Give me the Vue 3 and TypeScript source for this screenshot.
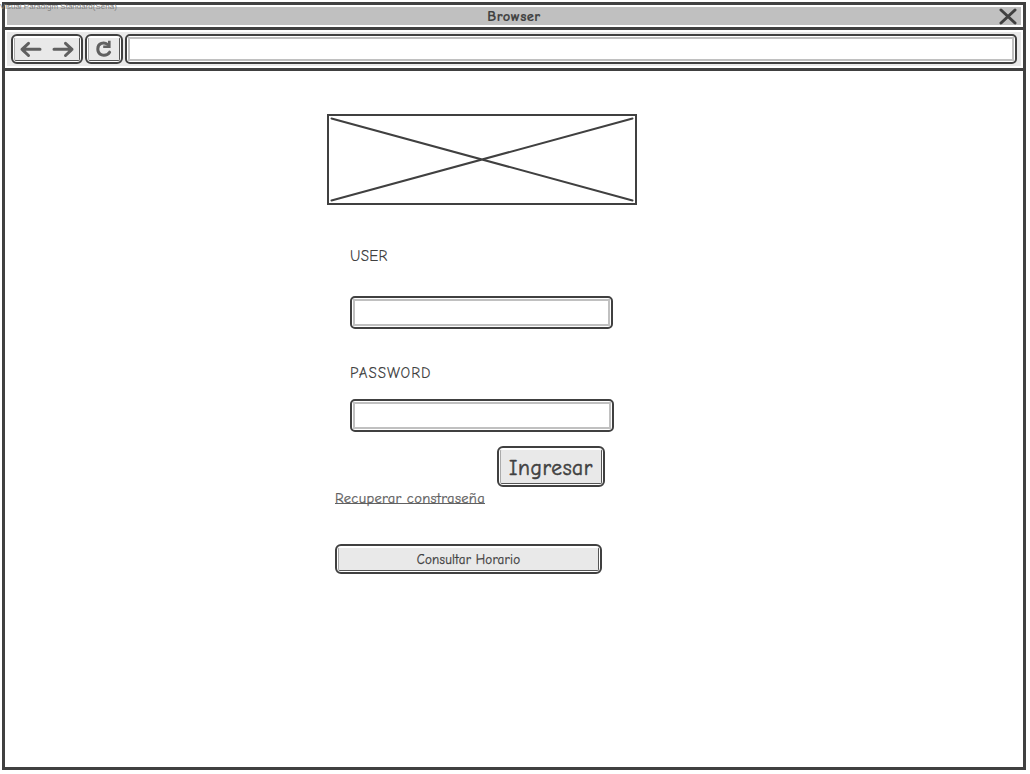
<script setup lang="ts">
import { ref } from 'vue'

const user = ref('')
const password = ref('')
const address = ref('')
</script>

<template>
  <div class="screen">
    <span class="watermark">Visual Paradigm Standard(Sena)</span>
    <main class="window">
      <header class="titlebar">
        <span class="title">Browser</span>
        <svg class="close" width="18" height="17" viewBox="0 0 18 17">
          <path d="M2 2 L16 15 M16 2 L2 15" />
        </svg>
      </header>
      <nav class="toolbar">
        <div class="button nav-pair">
          <svg width="68" height="26" viewBox="0 0 68 26">
            <path d="M27 13.3H9 M15.5 7.3L9 13.3L15.5 19.5 M41 13.3H59 M52.5 7.3L59 13.3L52.5 19.5" />
          </svg>
        </div>
        <div class="button reload">
          <svg width="34" height="26" viewBox="0 0 34 26">
            <path d="M20.5 8.4C17 5.6 10.8 7 10.8 13C10.8 18 14.5 19.3 17 19.2C19.5 19.2 21.5 18 22.6 16.2" />
            <path class="tip" d="M22.3 4.8V10.7H16.2" />
          </svg>
        </div>
        <input v-model="address" class="field address" type="text" aria-label="URL" />
      </nav>
      <section class="page">
        <svg class="image" width="310" height="91" viewBox="0 0 310 91">
          <path class="frame" d="M1 1H309V90H1Z" />
          <path d="M4.5 4.5L305.5 86.5M305.5 4.5L4.5 86.5" />
        </svg>
        <label class="label user-label" for="user">USER</label>
        <input id="user" v-model="user" class="field user-field" type="text" />
        <label class="label password-label" for="password">PASSWORD</label>
        <input id="password" v-model="password" class="field password-field" type="password" />
        <button class="button submit" type="button"><span>Ingresar</span></button>
        <a class="recover"><span>Recuperar constraseña</span></a>
        <button class="button schedule" type="button"><span>Consultar Horario</span></button>
      </section>
    </main>
  </div>
</template>

<style>
body {
  margin: 0;
  background: #fff;
}
</style>

<style scoped>
.screen {
  position: relative;
  box-sizing: border-box;
  width: 1030px;
  height: 774px;
  padding: 2px 4px 4px 2px;
  overflow: hidden;
  background: #fff;
  color: #404040;
  font-family: "Comic Sans MS", "Comic Neue", "Noto Sans", sans-serif;
  font-variant-ligatures: none;
}
.watermark {
  position: absolute;
  z-index: 2;
  left: 0;
  top: 2px;
  font: 8px/10px "Liberation Sans", sans-serif;
  color: #808080;
  white-space: nowrap;
}
.window {
  box-sizing: border-box;
  width: 1024px;
  height: 768px;
  border: 3px solid #404040;
  background: #fff;
}
.titlebar {
  position: relative;
  display: flex;
  align-items: center;
  justify-content: center;
  box-sizing: border-box;
  height: 22px;
  border: 2px solid #fff;
  background: #c0c0c0;
}
.title {
  padding-top: 2px;
  font-size: 14.5px;
  line-height: 18px;
  font-weight: 700;
  letter-spacing: 0.45px;
  -webkit-text-stroke: 0.2px currentColor;
}
.close {
  position: absolute;
  right: 4px;
  top: 1px;
}
svg {
  display: block;
  fill: none;
  stroke: #404040;
  stroke-linecap: round;
  stroke-linejoin: round;
}
.close path {
  stroke-width: 3;
}
.toolbar {
  display: flex;
  gap: 2px;
  box-sizing: border-box;
  height: 44px;
  padding: 2px 4px;
  border: solid #404040;
  border-width: 3px 0;
  background: #e9e9e9;
  box-shadow: inset 0 0 0 2px #fff;
}
.toolbar > * {
  margin-top: 2px;
  height: 30px;
  flex: none;
}
.toolbar > .nav-pair {
  width: 72px;
  margin-left: 2px;
}
.toolbar > .reload {
  width: 38px;
}
.toolbar > .address {
  width: 892px;
}
.button {
  position: relative;
  display: flex;
  align-items: center;
  justify-content: center;
  box-sizing: border-box;
  padding: 0;
  border: 2px solid #404040;
  border-radius: 6px;
  background: #e9e9e9;
  box-shadow: inset 0 0 0 1px #fff;
  color: #404040;
  font-family: inherit;
}
.button::after {
  content: "";
  position: absolute;
  inset: 1px;
  border: 1px solid;
  border-color: #fff #555 #555 #aaa;
  border-radius: 2px;
}
.toolbar svg {
  stroke: #606060;
  stroke-width: 3;
}
.toolbar .tip {
  stroke-linecap: butt;
  stroke-linejoin: miter;
  stroke-width: 2.6;
}
.field {
  box-sizing: border-box;
  padding: 0 4px;
  border: 2px solid #404040;
  border-radius: 5px;
  outline: none;
  background:
    linear-gradient(#fff, #fff) center / calc(100% - 6px) calc(100% - 6px) no-repeat,
    linear-gradient(#c0c0c0, #c0c0c0) center / calc(100% - 2px) calc(100% - 2px) no-repeat,
    #fff;
  font: 14px "Noto Sans", sans-serif;
}
.page {
  display: flex;
  flex-direction: column;
  align-items: flex-start;
  padding: 43px 0 0 322px;
}
.image {
  stroke-width: 2;
}
.image .frame {
  stroke-linejoin: miter;
}
.label {
  margin-left: 23px;
  font-size: 15px;
  line-height: 20px;
}
.button span,
.recover span {
  -webkit-text-stroke: 0.25px currentColor;
}
.label {
  -webkit-text-stroke: 0.1px currentColor;
}
.button span {
  padding-top: 2px;
}
.user-label {
  margin-top: 41px;
  letter-spacing: 0.3px;
}
.user-field {
  width: 263px;
  height: 33px;
  margin: 30px 0 0 23px;
}
.password-label {
  margin-top: 34px;
  letter-spacing: 1px;
}
.password-field {
  width: 264px;
  height: 33px;
  margin: 16px 0 0 23px;
}
.submit {
  width: 108px;
  height: 41px;
  margin: 14px 0 0 170px;
  font-size: 21.5px;
  line-height: 26px;
  letter-spacing: 0.6px;
}
.submit span {
  -webkit-text-stroke-width: 0.5px;
}
.recover {
  box-sizing: border-box;
  height: 17px;
  margin-left: 8px;
  border-bottom: 1px solid #606060;
  color: #606060;
  font-size: 14.5px;
  line-height: 24px;
  letter-spacing: 0.32px;
}
.schedule {
  width: 267px;
  height: 30px;
  margin: 40px 0 0 8px;
  font-size: 13px;
  line-height: 18px;
  letter-spacing: 0.25px;
}
</style>
